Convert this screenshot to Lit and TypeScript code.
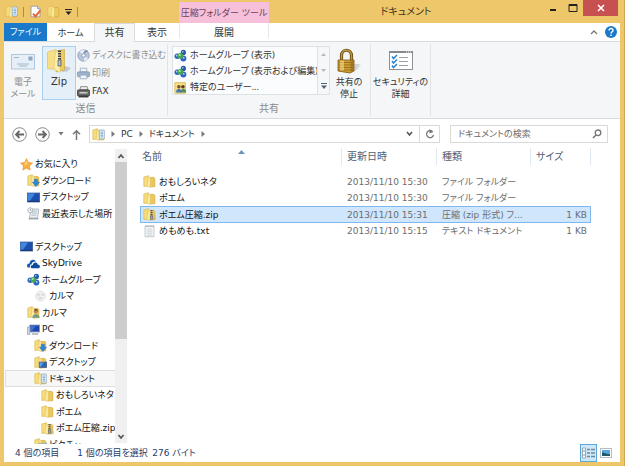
import { LitElement, html, css, svg, nothing } from "lit";
import { customElement } from "lit/decorators.js";
import { classMap } from "lit/directives/class-map.js";

const folderBody = svg`
  <path d="M7 3h6.500l1 1v10.500H7z" fill="#ecc75a" stroke="#cfa63a" stroke-width=".8"/>
  <path d="M1 2.500 6.500 .8v12.700L1 14z" fill="#f6dc7c" stroke="#d9b64d" stroke-width=".8"/>
  <path d="M6.500 1.500 9 3.500v12L5 13.800z" fill="#fbeba6" stroke="#dcb850" stroke-width=".5"/>`;

const homegroup = svg`
  <circle cx="4" cy="9" r="3.4" fill="#2f66c4"/><circle cx="11.5" cy="11.8" r="3.7" fill="#2f62c2"/>
  <circle cx="11.5" cy="4.2" r="3.200" fill="#2456b0"/><circle cx="7.800" cy="8.300" r="3.500" fill="#43a84b"/>
  <circle cx="7" cy="7.300" r="1.300" fill="#a5e3a0"/><circle cx="3.200" cy="8.200" r="1" fill="#b9d2f5"/>
  <circle cx="10.800" cy="3.500" r="1" fill="#b9d2f5"/><circle cx="12" cy="10.800" r="1.100" fill="#b9d2f5"/>`;

const monitor = svg`
  <rect x="0.5" y="2.5" width="15" height="11" fill="#1c4fae" stroke="#3b5f9b"/>
  <path d="M1 3h9L3 13H1z" fill="#3f86de"/><path d="M1 12h14v1.5H1z" fill="#183a75"/>`;

const ICONS: Record<string, unknown> = {
  folder: folderBody,
  zip: svg`${folderBody}<path d="M10.500 2.500v9" stroke="#4d5560" stroke-width="2.400" stroke-dasharray="1.400 .9"/>
    <path d="M9.200 9.500h2.800V14H9.200z" fill="#9aa0a8" stroke="#4d5560" stroke-width=".6"/><path d="M14.500 10l1.500 3-1.500 1.500z" fill="#b8bdc5"/>`,
  download: svg`${folderBody}<path d="M9 6.500h4V10h2.500L11 15.500 6.500 10H9z" fill="#2d86dd" stroke="#1766b8" stroke-width=".5"/>`,
  desktopFolder: svg`${folderBody}<rect x="6.500" y="7.500" width="9" height="6.500" fill="#2a63bd" stroke="#4c6180"/><path d="M7 8h5l-4 5.500H7z" fill="#5d9ce6"/>`,
  docs: svg`${folderBody}<path d="M9 2.500h6v11H9z" fill="#f4f9fd" stroke="#8faabd"/><path d="M10.500 5h3M10.500 7h3M10.500 9h3M10.500 11h3" stroke="#4b93cf"/>`,
  pictures: svg`${folderBody}<rect x="6.500" y="6.500" width="9" height="7" fill="#d8effb" stroke="#8aa2b2"/><path d="M7 13l3-3.500 2 2 1.500-1.500L15 13z" fill="#3f8a62"/>`,
  user: svg`${folderBody}<circle cx="11" cy="6.500" r="2.600" fill="#b98250"/><path d="M6.500 14.500c0-6 9-6 9 0z" fill="#6c9c86"/><path d="M8.500 5.500c1-3 5-2 5 0z" fill="#6c4a2c"/>`,
  users: svg`<path d="M1 2h13v13H1z" fill="#f6df85" stroke="#d7b64d"/><circle cx="6" cy="7" r="2.200" fill="#7b5130"/><circle cx="11" cy="7" r="2.200" fill="#5c3d22"/><path d="M2.500 14c0-6 7-6 7 0z" fill="#4a78b5"/><path d="M8 14c0-6 7-6 7 0z" fill="#4f8b63"/>`,
  star: svg`<path d="M8 .8l2.200 4.800 5.100.6-3.800 3.500 1 5.200L8 12.300l-4.500 2.600 1-5.200L.7 6.200l5.100-.6z" fill="#fbb040" stroke="#e58a1c" stroke-width=".8"/><path d="M8 3l1 3.500-4 3z" fill="#fee08a"/>`,
  desktop: monitor,
  recent: svg`<path d="M5 2.500h9.500l-1.500 11H3z" fill="#eef2f5" stroke="#a3adb5"/><path d="M6.500 5h6M6 7.500h6M5.500 10h6" stroke="#9fb0be"/><circle cx="4" cy="4" r="3" fill="#fff" stroke="#9aa5ae"/><path d="M4 2.500V4h1.500" stroke="#667" fill="none" stroke-width=".8"/><path d="M2 14.500h12" stroke="#8e9aa3" stroke-width="1.500"/>`,
  cloud: svg`<path d="M.8 12.800C-1 10 1 7.500 3 8c.5-5 6-6 8-2.500-3-.5-5 1-5.200 3.500-2 0-2.800 2-1.800 3.800z" fill="#1459b0"/><path d="M5.500 13.800c-2-2 0-4.600 1.600-3.800.4-3.800 5-4.300 6-.8 3 0 3.800 3.800 1.400 4.600z" fill="#0d4a9b"/>`,
  homegroup,
  face: svg`<circle cx="8" cy="7.500" r="6" fill="#f0f0f0" stroke="#dedede"/><path d="M4 6h3M9 6h3M6 10h4" stroke="#b8b8b8"/>`,
  pc: svg`<rect x="3.500" y="2.500" width="12" height="8.500" fill="#1f48a8" stroke="#8d9aad"/><path d="M4 3h7l-5 7.500H4z" fill="#3b6fd0"/><path d="M6 13.500h8" stroke="#8d9aad" stroke-width="1.500"/><path d="M.5 5h3v9h-3z" fill="#cfd6df" stroke="#9aa5b4"/>`,
  text: svg`<path d="M2.500 1.500h11v13h-11z" fill="#f6f8f9" stroke="#b7bec4"/><path d="M2.500 1.500h11" stroke="#8d979f" stroke-width="1.500" stroke-dasharray="1 1"/><path d="M4.500 5h7M4.500 7.500h7M4.500 10h7M4.500 12.500h7" stroke="#b9c7d2"/>`,
  disc: svg`<circle cx="8" cy="8" r="7" fill="#b8c6da" stroke="#8b9db8"/><path d="M8 8 3 3a7 7 0 0 1 6-2z" fill="#e9eff7"/><path d="M8 8l6 4a7 7 0 0 1-5 3z" fill="#dfe8f3"/><circle cx="8" cy="8" r="2.200" fill="#f7f9fb" stroke="#7e90ab"/><path d="M8 5l5-3" stroke="#6f86a8" stroke-width="1.500"/>`,
  print: svg`<path d="M4 1.500h8V6H4z" fill="#f0f5fa" stroke="#93a9c2"/><rect x=".5" y="6" width="15" height="6" rx="1.500" fill="#9db3cc" stroke="#7d94af"/><path d="M4 10h8v4.500H4z" fill="#f3f7fb" stroke="#93a9c2"/>`,
  fax: svg`<path d="M4.500 2h8l1 4h-10z" fill="#eee" stroke="#777"/><rect x=".5" y="6" width="15" height="7.500" rx="1.500" fill="#666" stroke="#333"/><path d="M3 9.500h10" stroke="#ccc" stroke-width="2"/><path d="M2 14.500h12" stroke="#222" stroke-width="1.500"/><path d="M11 9.500h2" stroke="#6ac36a" stroke-width="1.500"/>`,
  check: svg`<path d="M2.500 1.500h8l3 3v10h-11z" fill="#fff" stroke="#8995a3"/><path d="M10.500 1.500v3h3" fill="#dde" stroke="#8995a3"/><path d="M5 10.500l3 3.500 6-7.500" fill="none" stroke="#e0653a" stroke-width="2.400"/>`,
};

const icon = (name: string) =>
  html`<svg class="ico" viewBox="0 0 16 16" aria-hidden="true">${ICONS[name]}</svg>`;

const base = css`
  * { box-sizing: border-box; }
  button {
    font: inherit; color: inherit; background: none; border: 0; margin: 0; padding: 0;
    font-feature-settings: inherit; cursor: default; white-space: nowrap;
  }
  .ico { width: 13px; height: 13px; flex: none; display: block; }
  svg { flex: none; display: block; }
`;

@customElement("title-bar")
class TitleBar extends LitElement {
  static styles = [base, css`
    :host { display: flex; height: 23px; align-items: stretch; color: #4a3d22; }
    .quick { width: 175px; flex: none; display: flex; align-items: center; padding-left: 1px; gap: 5px; }
    .bar { width: 1px; height: 10px; background: #ab8c48; }
    .context {
      width: 90px; flex: none; margin-top: 2px; background: #f7c0da; color: #6b4259; white-space: nowrap;
      display: flex; align-items: center; justify-content: center;
    }
    h1 { flex: 1; margin: 0; font-size: 10px; font-weight: 400; text-align: center; line-height: 24px; color: #3f3620; }
    .controls { display: flex; height: 16px; padding-right: 2px; }
    .controls button { width: 20px; display: grid; place-items: center; }
    .controls .close { width: 35px; background: #c75050; }
  `];
  render() {
    return html`
      <div class="quick">
        ${icon("docs")}
        <span class="bar"></span>
        <button aria-label="プロパティ">${icon("check")}</button>
        <button aria-label="新しいフォルダー">${icon("folder")}</button>
        <button aria-label="カスタマイズ">
          <svg width="7" height="6" viewBox="0 0 7 6"><path d="M0 .5h7" stroke="#222"/><path d="M.5 2.500h6L3.500 6z" fill="#222"/></svg>
        </button>
        <span class="bar"></span>
      </div>
      <div class="context">圧縮フォルダー ツール</div>
      <h1>ドキュメント</h1>
      <div class="controls">
        <button aria-label="最小化"><svg width="8" height="8" viewBox="0 0 8 8"><path d="M1 6h6" stroke="#222" stroke-width="2"/></svg></button>
        <button aria-label="最大化"><svg width="10" height="8" viewBox="0 0 10 8"><path d="M1 .5h8v7H1z" fill="none" stroke="#222"/><path d="M1 1h8" stroke="#222" stroke-width="2"/></svg></button>
        <button class="close" aria-label="閉じる"><svg width="8" height="8" viewBox="0 0 8 8"><path d="M1 1l6 6M7 1 1 7" stroke="#fff" stroke-width="1.600"/></svg></button>
      </div>`;
  }
}

@customElement("ribbon-bar")
class RibbonBar extends LitElement {
  static styles = [base, css`
    :host { display: block; color: #333; }
    .tabs { display: flex; height: 19px; background: #fff; border-bottom: 1px solid #dadbdc; }
    .tabs button { height: 19px; width: 47px; }
    .tabs .file { width: 43px; height: 18px; background: #1979ca; color: #fff; }
    .tabs .active { width: 41px; background: #f5f6f7; border: 1px solid #dadbdc; border-bottom: 0; font-size: 10px; }
    .tabs .shown { width: 44px; font-size: 10px; }
    .tabs .tool { width: 90px; border: 1px solid #e6e7e8; border-width: 0 1px; height: 15px; line-height: 15px; padding-top: 2px; font-size: 10px; }
    .tabs .right { flex: 1; display: flex; justify-content: flex-end; align-items: center; gap: 7px; padding-right: 3px; }
    .tabs .right button { width: auto; height: auto; }
    .panel { display: flex; height: 77px; background: #f5f6f7; border-bottom: 1px solid #dadbdc; padding: 2px 0; }
    .group { display: flex; flex-direction: column; border-right: 1px solid #e2e3e4; }
    .body { display: flex; flex: 1; align-items: flex-start; padding-top: 2px; }
    .label { text-align: center; color: #8b8b8b; line-height: 17px; font-size: 10px; }
    .send { width: 164px; }
    .share { width: 203px; }
    .safe { width: 60px; }
    .big { display: flex; flex-direction: column; align-items: center; line-height: 12px; padding-top: 2px; gap: 2px; width: 38px; }
    .safe .big { width: 59px; }
    .zip { width: 34px; height: 54px; background: #e5eff8; border: 1px solid #a9cfee; padding-top: 1px; font-size: 10px; }
    .off { color: #8f8f8f; }
    .stack { display: flex; flex-direction: column; gap: 2px; padding: 1px 0 0 1px; }
    .stack button, .gallery button { display: flex; align-items: center; height: 16px; gap: 2px; }
    .gallery { display: flex; width: 158px; height: 49px; margin-left: 4px; border: 1px solid #dfe2e5; background: #fbfcfd; }
    .gallery .items { flex: 1; min-width: 0; font-family: "Noto Sans", "Noto Sans CJK JP", sans-serif; }
    .gallery .items button { gap: 3px; padding-left: 1px; }
    .spin { width: 12px; border-left: 1px solid #dfe2e5; background: #f6f7f8; display: flex; flex-direction: column; }
    .spin button { flex: 1; justify-content: center; }
  `];
  render() {
    return html`
      <div class="tabs" role="tablist">
        <button class="file">ファイル</button>
        <button role="tab">ホーム</button>
        <button role="tab" aria-selected="true" class="active">共有</button>
        <button role="tab" class="shown">表示</button>
        <button role="tab" class="tool">展開</button>
        <div class="right">
          <button aria-label="リボンの最小化"><svg width="8" height="6" viewBox="0 0 8 6"><path d="M1 5l3-3 3 3" fill="none" stroke="#777" stroke-width="1.300"/></svg></button>
          <button aria-label="ヘルプ"><svg width="12" height="12" viewBox="0 0 12 12"><circle cx="6" cy="6" r="6" fill="#1979ca"/><path d="M4 4.500c0-2.700 4.200-2.500 4 0C8 6 6 5.800 6 7.500M6 8.500V10" fill="none" stroke="#fff" stroke-width="1.400"/></svg></button>
        </div>
      </div>
      <div class="panel">
        <section class="group send">
          <div class="body">
            <button class="big off">
              <svg width="26" height="26" viewBox="-1 -2 26 26"><rect x=".5" y="4.500" width="23" height="14.500" fill="#e6eef7" stroke="#b3c7dc"/><path d="M3 7.500h5M6 14h12M8 16h8" stroke="#a4b7cb"/><rect x="17.500" y="6.500" width="4" height="4" fill="#8ea8c4"/></svg>
              <span>電子<br>メール</span>
            </button>
            <button class="big zip">
              <svg width="26" height="26" viewBox="0 0 26 26">
                <path d="M17 17.500l8 2.500-4 3.500-5 .5z" fill="#c3c8cf"/>
                <path d="M10 3l8.500-1.500V22l-8.500 2z" fill="#eecb5a" stroke="#c9a236" stroke-width=".6"/>
                <path d="M1.500 4 10 1.500v20L1.500 20.500z" fill="#f6df86" stroke="#dcbc58" stroke-width=".6"/>
                <path d="M9.500 2.500l4.500 3v19L8 21z" fill="#fbefb0" stroke="#e0c062" stroke-width=".5"/>
                <path d="M13.500 2.500v10" stroke="#3d444c" stroke-width="3" stroke-dasharray="1.500 1"/>
                <path d="M12 12h3v6h-3z" fill="#b8bec5" stroke="#4a4f55" stroke-width=".7"/>
              </svg>
              <span>Zip</span>
            </button>
            <div class="stack">
              <button class="off">${icon("disc")}ディスクに書き込む</button>
              <button class="off">${icon("print")}印刷</button>
              <button>${icon("fax")}FAX</button>
            </div>
          </div>
          <div class="label">送信</div>
        </section>
        <section class="group share">
          <div class="body">
            <div class="gallery">
              <div class="items">
                <button>${icon("homegroup")}ホームグループ (表示)</button>
                <button>${icon("homegroup")}ホームグループ (表示および編集)</button>
                <button>${icon("users")}特定のユーザー...</button>
              </div>
              <div class="spin">
                <button aria-label="上へ"><svg width="5" height="3" viewBox="0 0 5 3"><path d="M0 3h5L2.500 0z" fill="#b4bac2"/></svg></button>
                <button aria-label="下へ"><svg width="5" height="3" viewBox="0 0 5 3"><path d="M0 0h5L2.500 3z" fill="#b4bac2"/></svg></button>
                <button aria-label="その他"><svg width="6" height="6" viewBox="0 0 6 6"><path d="M0 .5h6" stroke="#55606e"/><path d="M0 2.500h6L3 6z" fill="#55606e"/></svg></button>
              </div>
            </div>
            <button class="big">
              <svg width="26" height="26" viewBox="0 0 26 26">
                <path d="M17 16h8l-3 2h3l-4 2h2l-4 3-5 1z" fill="#d3d4d6"/>
                <path d="M5.500 13V7.500c0-7 10-7 10 0V13" fill="none" stroke="#6d4e14" stroke-width="3.200"/>
                <path d="M5.500 13V7.500c0-7 10-7 10 0V13" fill="none" stroke="#c39a4a" stroke-width="1.300"/>
                <path d="M2 12h16v11l-4 2-12-2z" fill="#d09e33" stroke="#7a5512" stroke-width=".8"/>
                <path d="M2.500 14.500h15M2.500 17h15M2.500 19.500h15M2.500 22h15" stroke="#8a651d" stroke-width=".8"/>
                <path d="M4 12.500h4v10H4z" fill="#f6dc8c" opacity=".6"/><path d="M14.500 12.500h3v10l-3 1.500z" fill="#8a5f12" opacity=".5"/>
              </svg>
              <span>共有の<br>停止</span>
            </button>
          </div>
          <div class="label">共有</div>
        </section>
        <section class="group safe">
          <div class="body">
            <button class="big">
              <svg width="24" height="26" viewBox="0 1 24 26">
                <rect x=".5" y="4.500" width="23" height="18" fill="#fff" stroke="#8c9196"/><path d="M0 5h24" stroke="#84898e" stroke-width="2"/>
                <path d="M17 5h5" stroke="#fff" stroke-dasharray="1 1"/>
                <path d="M3 9.500l1.500 2L8 8M3 14l1.500 2L8 12.500M3 18.500l1.500 2L8 17" fill="none" stroke="#2a86d0" stroke-width="1.500"/>
                <path d="M10 10.500h9M10 14.500h9M10 18.500h9" stroke="#9a9fa4"/>
              </svg>
              <span>セキュリティの<br>詳細</span>
            </button>
          </div>
        </section>
      </div>`;
  }
}

@customElement("address-row")
class AddressRow extends LitElement {
  static styles = [base, css`
    :host { display: flex; align-items: center; height: 29px; padding: 1px 12px 0 8px; color: #333; }
    .nav { display: flex; align-items: center; gap: 8px; width: 77px; flex: none; }
    .path { flex: 1; display: flex; align-items: center; height: 18px; border: 1px solid #d9d9d9; padding-left: 2px; gap: 6px; }
    .path .end { margin-left: auto; }
    .path .refresh { width: 20px; height: 16px; border-left: 1px solid #d9d9d9; display: grid; place-items: center; }
    .search { flex: none; width: 158px; height: 18px; margin-left: 10px; border: 1px solid #d9d9d9; display: flex; align-items: center; padding: 0 5px 0 7px; }
    input { flex: 1; min-width: 0; border: 0; outline: 0; padding: 0; background: none; font: inherit; font-feature-settings: inherit; height: 16px; }
    input::placeholder { color: #6d6d6d; opacity: 1; }
  `];
  render() {
    const sep = html`<svg width="4" height="6" viewBox="0 0 4 6"><path d="M.5 0v6L4 3z" fill="#777"/></svg>`;
    const round = (d: string) => html`<svg width="15" height="15" viewBox="0 0 15 15"><circle cx="7.500" cy="7.500" r="6.800" fill="#fff" stroke="#888"/><path d=${d} fill="none" stroke="#666" stroke-width="1.800"/></svg>`;
    return html`
      <div class="nav">
        <button aria-label="戻る">${round("M12 7.500H4M7.500 4 4 7.500 7.500 11")}</button>
        <button aria-label="進む">${round("M3 7.500h8M7.500 4 11 7.500 7.500 11")}</button>
        <button aria-label="履歴"><svg width="6" height="4" viewBox="0 0 6 4"><path d="M.5 0h5L3 3.500z" fill="#777"/></svg></button>
        <button aria-label="上へ"><svg width="9" height="11" viewBox="0 0 9 11"><path d="M4.500 11V2M1 5.200 4.500 1.700 8 5.200" fill="none" stroke="#777" stroke-width="1.500"/></svg></button>
      </div>
      <div class="path">
        ${icon("docs")}${sep}<button>PC</button>${sep}<button>ドキュメント</button>${sep}
        <button class="end" aria-label="以前の場所"><svg width="7" height="6" viewBox="0 0 7 6"><path d="M1 1l2.500 3L6 1" fill="none" stroke="#555" stroke-width="1.600"/></svg></button>
        <button class="refresh" aria-label="更新"><svg width="10" height="10" viewBox="0 0 10 10"><path d="M7.500 2.600A3.500 3.500 0 1 0 8.500 6" fill="none" stroke="#777" stroke-width="1.300"/><path d="M4.500 0v4.500L8.500 3z" fill="#777"/></svg></button>
      </div>
      <label class="search">
        <input type="search" aria-label="検索" placeholder="ドキュメントの検索">
        <svg width="10" height="10" viewBox="0 0 10 10"><circle cx="6" cy="3.800" r="2.800" fill="none" stroke="#777" stroke-width="1.300"/><path d="M4 6 1 9" stroke="#777" stroke-width="1.600"/></svg>
      </label>`;
  }
}

interface TreeItem { label?: string; icon?: string; level?: number; selected?: boolean }
const TREE: TreeItem[] = [
  { label: "お気に入り", icon: "star", level: 0 },
  { label: "ダウンロード", icon: "download", level: 1 },
  { label: "デスクトップ", icon: "desktop", level: 1 },
  { label: "最近表示した場所", icon: "recent", level: 1 },
  {},
  { label: "デスクトップ", icon: "desktop", level: 0 },
  { label: "SkyDrive", icon: "cloud", level: 1 },
  { label: "ホームグループ", icon: "homegroup", level: 1 },
  { label: "カルマ", icon: "face", level: 2 },
  { label: "カルマ", icon: "user", level: 1 },
  { label: "PC", icon: "pc", level: 1 },
  { label: "ダウンロード", icon: "download", level: 2 },
  { label: "デスクトップ", icon: "desktopFolder", level: 2 },
  { label: "ドキュメント", icon: "docs", level: 2, selected: true },
  { label: "おもしろいネタ", icon: "folder", level: 3 },
  { label: "ポエム", icon: "folder", level: 3 },
  { label: "ポエム圧縮.zip", icon: "zip", level: 3 },
  { label: "ピクチャ", icon: "pictures", level: 2 },
];

@customElement("nav-tree")
class NavTree extends LitElement {
  static styles = [base, css`
    :host { display: flex; width: 123px; flex: none; overflow: hidden; color: #111; }
    ul { flex: 1; min-width: 0; height: 0; list-style: none; margin: 0; padding: 8px 0 0 1px; display: grid; grid-auto-rows: 16px 17px; }
    li { display: flex; min-width: 0; overflow: hidden; border: 1px solid transparent; border-right-width: 0; padding-left: 14px; }
    li.l1 { padding-left: 21px; }
    li.l2 { padding-left: 28px; }
    li.l3 { padding-left: 35px; }
    li.sel { background: #f7f7f7; border-color: #dedede; }
    li button { display: flex; align-items: center; gap: 2px; }
    .scroll { width: 12px; background: #f0f0f0; margin: 1px 0; display: flex; flex-direction: column; }
    .scroll button { height: 13px; display: grid; place-items: center; }
    .track { flex: 1; display: flex; flex-direction: column; }
    .thumb { flex: 0 0 66%; background: #cdcdcd; }
  `];
  render() {
    return html`
      <ul>${TREE.map((n) => html`
        <li class=${classMap({ ["l" + (n.level ?? 0)]: true, sel: !!n.selected })}>
          ${n.label ? html`<button>${icon(n.icon!)}<span>${n.label}</span></button>` : nothing}
        </li>`)}
      </ul>
      <div class="scroll">
        <button aria-label="上へ"><svg width="8" height="6" viewBox="0 0 8 6"><path d="M1.500 5 4 2l2.500 3" fill="none" stroke="#555" stroke-width="1.700"/></svg></button>
        <div class="track"><div class="thumb"></div></div>
        <button aria-label="下へ"><svg width="8" height="6" viewBox="0 0 8 6"><path d="M1.500 1 4 4l2.500-3" fill="none" stroke="#555" stroke-width="1.700"/></svg></button>
      </div>`;
  }
}

const FILES = [
  { icon: "folder", name: "おもしろいネタ", date: "2013/11/10 15:30", type: "ファイル フォルダー", size: "" },
  { icon: "folder", name: "ポエム", date: "2013/11/10 15:30", type: "ファイル フォルダー", size: "" },
  { icon: "zip", name: "ポエム圧縮.zip", date: "2013/11/10 15:31", type: "圧縮 (zip 形式) フ...", size: "1 KB", selected: true },
  { icon: "text", name: "めもめも.txt", date: "2013/11/10 15:15", type: "テキスト ドキュメント", size: "1 KB" },
];

@customElement("file-list")
class FileList extends LitElement {
  static styles = [base, css`
    :host { display: block; flex: 1; min-width: 0; padding-left: 13px; overflow: hidden; }
    table { border-collapse: separate; border-spacing: 0; table-layout: fixed; width: 451px; color: #6d6d6d; line-height: 14px; }
    .c1 { width: 202px; } .c2 { width: 95px; } .c3 { width: 94px; } .c4 { width: 60px; }
    th, td { padding: 0 0 0 5px; text-align: left; font-weight: 400; white-space: nowrap; overflow: hidden; }
    th { height: 17px; color: #4c607a; border-right: 1px solid #e0e8f2; font-size: 10px; }
    th:first-child { padding-left: 2px; }
    .head { display: grid; grid-template-columns: 1fr auto 1fr; }
    .gap td { height: 8px; }
    td { height: 16px; border: 1px solid transparent; border-width: 1px 0; }
    tr:nth-child(odd) td { height: 17px; }
    td:first-child { padding-left: 3px; }
    td:last-child { text-align: right; padding-right: 4px; }
    .name { display: flex; align-items: center; gap: 3px; color: #111; }
    .sel td { background: #cfe6fd; border-color: #7fb8ee; }
    .sel td:first-child { border-left: 1px solid #7fb8ee; padding-left: 2px; }
    .sel td:last-child { border-right: 1px solid #7fb8ee; padding-right: 3px; }
  `];
  render() {
    return html`<table>
      <colgroup><col class="c1"><col class="c2"><col class="c3"><col class="c4"></colgroup>
      <thead>
        <tr><th><div class="head">名前<svg width="7" height="4" viewBox="0 0 7 4"><path d="M0 4h7L3.500 0z" fill="#6f93b8"/></svg></div></th><th>更新日時</th><th>種類</th><th>サイズ</th></tr>
        <tr class="gap"><td colspan="4"></td></tr>
      </thead>
      <tbody>${FILES.map((f) => html`
        <tr class=${f.selected ? "sel" : ""}>
          <td><span class="name">${icon(f.icon)}${f.name}</span></td><td>${f.date}</td><td>${f.type}</td><td>${f.size}</td>
        </tr>`)}
      </tbody>
    </table>`;
  }
}

@customElement("app-root")
class AppRoot extends LitElement {
  static styles = [base, css`
    :host {
      display: flex; flex-direction: column; height: 100vh; box-sizing: border-box;
      padding: 0 4px 4px; background: #efc76b; border-right: 1px solid #c9a656;
      font: 9px/14px "DejaVu Sans", "Noto Sans CJK JP", sans-serif;
      font-feature-settings: "palt";
    }
    .window { flex: 1; min-height: 0; display: flex; flex-direction: column; background: #fff; }
    .main { flex: 1; min-height: 0; display: flex; }
    footer { display: flex; align-items: center; height: 18px; padding: 0 6px 0 11px; gap: 18px; color: #1f3c68; }
    .views { margin-left: auto; display: flex; align-items: center; }
    .views button { width: 17px; height: 18px; display: grid; place-items: center; }
    .views .on { background: #cde8f8; border: 1px solid #5aa7dc; }
  `];
  render() {
    return html`
      <title-bar></title-bar>
      <div class="window">
        <ribbon-bar></ribbon-bar>
        <address-row></address-row>
        <div class="main"><nav-tree></nav-tree><file-list></file-list></div>
        <footer>
          <span>4 個の項目</span><span>1 個の項目を選択&ensp;276 バイト</span>
          <div class="views">
            <button class="on" aria-label="詳細"><svg width="13" height="12" viewBox="0 0 13 12"><path d="M.5 1h3v10h-3z" fill="#fff" stroke="#9aa9b5"/><path d="M1 4h2M1 8h2" stroke="#8b99a5"/><path d="M5 2.500h3M9 2.500h4M5 6h3M9 6h4M5 9.500h3M9 9.500h4" stroke="#75889a" stroke-width="1.400"/></svg></button>
            <button aria-label="大アイコン"><svg width="12" height="10" viewBox="0 0 12 10"><rect x=".5" y=".5" width="11" height="9" fill="#fff" stroke="#b4bdc5"/><path d="M2 2h8v6H2z" fill="#5aa3dd"/><path d="M2 8V4.500c3 0 4 2 8 1.500v2z" fill="#1f5a6b"/></svg></button>
          </div>
        </footer>
      </div>`;
  }
}
